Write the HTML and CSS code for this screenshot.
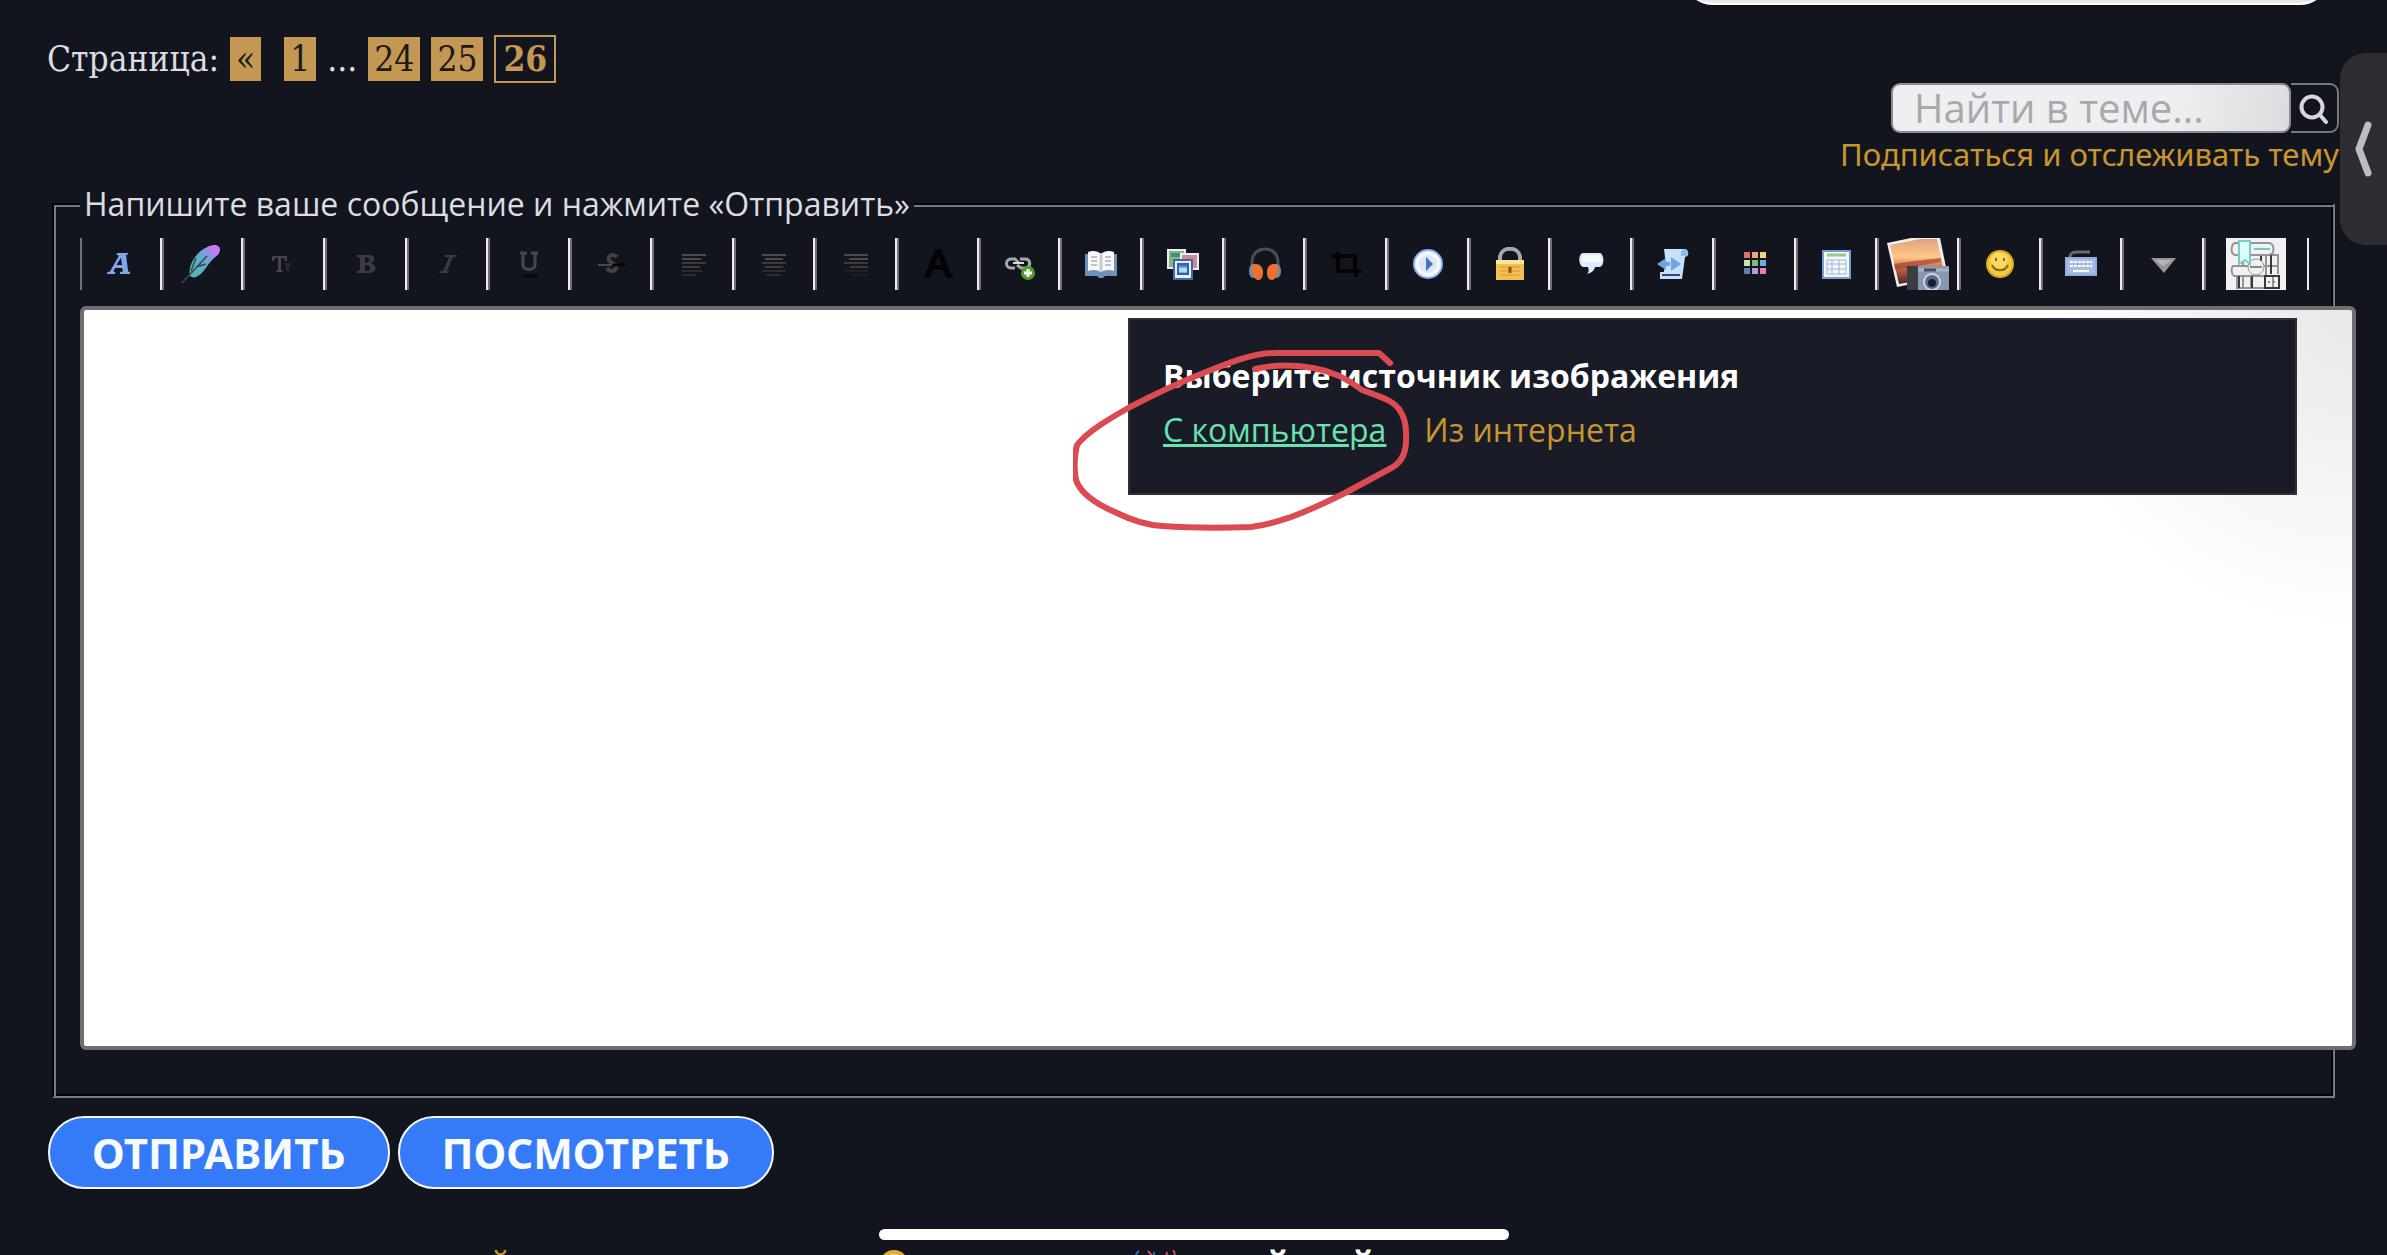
FILE: index.html
```html
<!DOCTYPE html>
<html lang="ru">
<head>
<meta charset="utf-8">
<meta name="viewport" content="width=device-width, initial-scale=1">
<title>Ответ в теме</title>
<link rel="stylesheet" href="styles.css">
</head>
<body>
<div class="top-sheet"></div>

<header class="header">
  <nav class="pages" aria-label="Страницы">
    <span class="pages-label">Страница:</span>
    <a class="page prev" href="#">«</a>
    <a class="page" href="#">1</a>
    <span>...</span>
    <a class="page" href="#">24</a>
    <a class="page" href="#">25</a>
    <b class="page current">26</b>
  </nav>
  <div class="tools">
    <form class="search">
      <input class="search-input" type="search" placeholder="Найти в теме..." aria-label="Найти в теме">
      <button class="search-button" type="button" aria-label="Найти">
        <svg width="30" height="32" viewBox="0 0 30 32" fill="none" stroke="#d6d6dc" stroke-linecap="round"><circle cx="13" cy="15" r="10.5" stroke-width="4"/><path d="M21 23l6 7" stroke-width="4"/></svg>
      </button>
    </form>
    <a class="subscribe" href="#">Подписаться и отслеживать тему</a>
  </div>
</header>

<main>
<form>
  <fieldset class="editor">
    <legend>Напишите ваше сообщение и нажмите «Отправить»</legend>
    <div class="toolbar">
      <button type="button" aria-label="Шрифт"><svg width="32" height="32" viewBox="0 0 32 32" fill="#7fa5ee"><path d="M2 26h8l.4-2-2.200-.5 2-3.500h7l.7 3.500-2.700.5-.3 2h10l.3-2-2-.5L21 7l2-.5V5H12l-.4 2 2.400.5L5 23.500l-2.500.5zM11.500 17L16 9.500l1 7.500z"/></svg></button>
      <button type="button" aria-label="Перо"><svg width="44" height="44" viewBox="0 0 44 44"><defs><linearGradient id="feather" x1="0" y1="1" x2="1" y2="0"><stop offset="0.200" stop-color="#55b5b8"/><stop offset="0.550" stop-color="#6aa9d8"/><stop offset="0.850" stop-color="#c879ee"/></linearGradient></defs><path d="M9 34C6 22 18 5 33 3c8 0 8 8 0 13-7 6-9 15-18 19-3 1-4 0-6-1z" fill="url(#feather)"/><path d="M1 41L26 14M10 29l5-13M15 25l10-3" stroke="#394550" stroke-width="1.500" fill="none"/></svg></button>
      <button type="button" aria-label="Размер"><svg width="32" height="32" viewBox="0 0 32 32" fill="#44464b"><path d="M4 8h15v5h-2l-1-3h-3v12l2 1v1H8v-1l2-1V10H7l-1 3H4z"/><path d="M17 15h6v3h-2v5h-3v-5h-1z" fill="#26292e"/></svg></button>
      <button type="button" aria-label="Полужирный"><svg width="32" height="32" viewBox="0 0 32 32" fill="#393b40"><path fill-rule="evenodd" d="M7 7h12c7 0 7 7 1 8 8 1 7 10-1 10H7v-2l3-1V10L7 9zm8 2v6c6 0 6-6 0-6zm0 8v6c7 1 7-6 0-6z"/></svg></button>
      <button type="button" aria-label="Курсив"><svg width="32" height="32" viewBox="0 0 32 32" fill="#393b40"><path d="M13 7h12l-1 2h-3l-6 14h2l-1 2H7l1-2h3l6-14h-4z"/></svg></button>
      <button type="button" aria-label="Подчёркнутый"><svg width="32" height="32" viewBox="0 0 32 32" fill="none"><path d="M7 5h7M18 5h7M10 5v12c0 6 12 6 12 0V5" stroke="#46484d" stroke-width="3"/><path d="M8 28h17" stroke="#08090c" stroke-width="3"/></svg></button>
      <button type="button" aria-label="Зачёркнутый"><svg width="32" height="32" viewBox="0 0 32 32" fill="none"><path d="M22 9c-4-4-10-1-8 3 2 4 8 3 7 8-1 4-7 4-9 0" stroke="#404247" stroke-width="4"/><path d="M3 17h14" stroke="#494b50" stroke-width="2"/><path d="M17 17h13" stroke="#050608" stroke-width="3"/></svg></button>
      <button type="button" aria-label="По левому краю"><svg width="32" height="32" viewBox="0 0 32 32" fill="none" stroke-width="2"><path d="M5 7h24M5 11h19" stroke="#484a4e"/><path d="M5 15h24M5 19h18" stroke="#393b3f"/><path d="M5 23h20M5 27h14" stroke="#292b30"/></svg></button>
      <button type="button" aria-label="По центру"><svg width="32" height="32" viewBox="0 0 32 32" fill="none" stroke-width="2"><path d="M4 7h24M7 11h18" stroke="#484a4e"/><path d="M4 15h24M7 19h18" stroke="#393b3f"/><path d="M4 23h24M8 27h15" stroke="#292b30"/></svg></button>
      <button type="button" aria-label="По правому краю"><svg width="32" height="32" viewBox="0 0 32 32" fill="none" stroke-width="2"><path d="M4 7h24M9 11h19" stroke="#484a4e"/><path d="M4 15h24M10 19h18" stroke="#393b3f"/><path d="M4 23h24M12 27h16" stroke="#1d1f24"/></svg></button>
      <button type="button" aria-label="Цвет"><svg width="32" height="34" viewBox="0 0 32 34"><path fill-rule="evenodd" d="M2 31L13 2h6l12 29h-7l-3-8H11l-3 8zm11-13h7l-4-9z" fill="#030405"/></svg></button>
      <button type="button" aria-label="Ссылка"><svg width="32" height="32" viewBox="0 0 32 32" fill="none"><path d="M12 20H8c-6 0-6-9 0-9h4l4 4M17 11h5c6 0 6 8 1 9h-5l-4-3" stroke="#a4a7a8" stroke-width="3"/><path d="M10 15h11" stroke="#d8d8d8" stroke-width="2"/><circle cx="25" cy="25" r="7" fill="#4f9c27"/><path d="M25 21v8M21 25h8" stroke="#fff" stroke-width="3"/></svg></button>
      <button type="button" aria-label="Книга"><svg width="32" height="32" viewBox="0 0 32 32"><path d="M0 6h32v22H20l-2 2h-4l-2-2H0z" fill="#6e91b7"/><path d="M3 4c5-2 10-1 13 2 3-3 8-4 13-2v19c-5-2-10-1-13 1-3-2-8-3-13-1z" fill="#f8f8f8"/><path d="M16 5v19" stroke="#c9ccd2" stroke-width="3"/><path d="M6 9h6M6 13h6M6 17h6M20 9h6M20 13h6M20 17h6" stroke="#bcc1c9" stroke-width="2"/></svg></button>
      <button type="button" aria-label="Галерея"><svg width="32" height="32" viewBox="0 0 32 32" stroke="#e9effa" stroke-width="2"><path d="M1 2h17v18H1z" fill="#86b783"/><path d="M4 5h11v4H4z" fill="#4a8d6a" stroke="none"/><path d="M14 6h17v15H14z" fill="#d18a94"/><path d="M7 12h18v19H7z" fill="#e9effa" stroke="#3f68ad"/><path d="M11 16h10v10H11z" fill="#4c88c8" stroke="#3561a8"/><path d="M12 22h8" stroke="#a5ddf7" stroke-width="5"/></svg></button>
      <button type="button" aria-label="Аудио"><svg width="32" height="34" viewBox="0 0 32 34"><path d="M3 22V14C4-2 28-2 29 14v8" fill="none" stroke="#4a4e52" stroke-width="3"/><ellipse cx="4" cy="24" rx="4" ry="7" fill="#628eb2"/><ellipse cx="28" cy="24" rx="4" ry="7" fill="#628eb2"/><path d="M3 18c6-3 11 1 11 7s-2 8-5 8-8-7-6-15zM29 18c-6-3-11 1-11 7s2 8 5 8 8-7 6-15z" fill="#ed7130"/></svg></button>
      <button type="button" aria-label="Обрезать"><svg width="32" height="32" viewBox="0 0 32 32"><path d="M8 4v19h18v6M2 8h23v15h6" fill="none" stroke="#030405" stroke-width="4"/></svg></button>
      <button type="button" aria-label="Видео"><svg width="32" height="32" viewBox="0 0 32 32"><circle cx="16" cy="16" r="15" fill="#8ab0e8"/><circle cx="16" cy="16" r="13" fill="#f4f7fd"/><circle cx="16" cy="16" r="9" fill="#dce7f8"/><path d="M14 9l7 7-7 7z" fill="#4974bb"/></svg></button>
      <button type="button" aria-label="Скрытый текст"><svg width="32" height="34" viewBox="0 0 32 34"><path d="M6 14V10C7-1 25-1 26 10v4" fill="none" stroke="#a5a7ab" stroke-width="4"/><path d="M2 13h28v20H2z" fill="#f2bf55"/><path d="M2 13h28v4H2z" fill="#fbe596"/><path d="M6 20h20M6 24h20M6 28h20" stroke="#d9972e" stroke-width="1"/><path d="M16 20v6" stroke="#80571b" stroke-width="3"/></svg></button>
      <button type="button" aria-label="Цитата"><svg width="32" height="32" viewBox="0 0 32 32"><path d="M8 5h17c4 1 5 12 0 14h-5c-1 4-4 6-8 7 2-2 2-4 1-7H8C3 17 3 6 8 5z" fill="#dceaff"/><path d="M9 7h15c2 1 3 5 2 7H7c-1-3 0-6 2-7z" fill="#f4f8ff"/></svg></button>
      <button type="button" aria-label="Код"><svg width="32" height="34" viewBox="0 0 32 34"><path d="M7 2h20c5 0 6 7 1 8l-3 22H3v-7h4l1-15z" fill="#c7e0fb"/><path d="M27 2c5 0 5 7 1 7h-4V4" fill="#8cbce9"/><path d="M9 11l-9 6 9 6v-4h4v-4H9zM14 10l10 7-10 7z" fill="#6fa3e2"/><path d="M5 28h18" stroke="#314971" stroke-width="2"/></svg></button>
      <button type="button" aria-label="Палитра"><svg width="32" height="32" viewBox="0 0 32 32"><path d="M5 4h6v6H5z" fill="#e1726b"/><path d="M13 4h6v6h-6z" fill="#eca47a"/><path d="M21 4h6v6h-6z" fill="#ebd985"/><path d="M5 12h6v6H5z" fill="#cfe5a8"/><path d="M13 12h6v6h-6z" fill="#74c177"/><path d="M21 12h6v6h-6z" fill="#70aae3"/><path d="M5 20h6v6H5z" fill="#657daf"/><path d="M13 20h6v6h-6z" fill="#bb96d9"/><path d="M21 20h6v6h-6z" fill="#ec7eab"/></svg></button>
      <button type="button" aria-label="Таблица"><svg width="32" height="32" viewBox="0 0 32 32"><path d="M3 3h27v27H3z" fill="#f3f7fc" stroke="#729dd3" stroke-width="2"/><path d="M7 7h19" stroke="#9bc889" stroke-width="3"/><path d="M7 12h19v14H7zM7 16h19M7 21h19M12 12v14M19 12v14" fill="none" stroke="#9cb5d9"/></svg></button>
      <button type="button" aria-label="Изображение"><svg width="62" height="52" viewBox="0 0 62 52"><defs><linearGradient id="sunset" x1="0" y1="0" x2="0" y2="1"><stop offset="0" stop-color="#dfa184"/><stop offset="0.400" stop-color="#ffc987"/><stop offset="0.650" stop-color="#cf6045"/><stop offset="1" stop-color="#4d2525"/></linearGradient></defs><path d="M0 5L24 0h29l8 39-51 10z" fill="#f0eeee"/><path d="M3 7l30-6h17l8 37-46 8z" fill="url(#sunset)"/><path d="M7 26l20-3 27-3v4l-24 4-22 4z" fill="#a3453a" opacity=".7"/><path d="M20 28h42v24H20z" fill="#8999b3"/><path d="M20 28h11v24H20z" fill="#3b3d44"/><path d="M31 32h31" stroke="#a9b5c7" stroke-width="3"/><circle cx="45" cy="44" r="9" fill="#d0d6e1"/><circle cx="45" cy="44" r="7" fill="#5d6b83"/><circle cx="45" cy="45" r="4" fill="#151e35"/><path d="M37 32h12" stroke="#434d61" stroke-width="3"/></svg></button>
      <button type="button" aria-label="Смайлы"><svg width="32" height="32" viewBox="0 0 32 32"><circle cx="16" cy="16" r="14" fill="#dca91f"/><circle cx="16" cy="16" r="12" fill="#f0cb46"/><circle cx="15" cy="12" r="8" fill="#f6db63"/><path d="M12 10v3M20 10v3M8 17c3 7 13 7 16 0" fill="none" stroke="#96660c" stroke-width="2"/></svg></button>
      <button type="button" aria-label="Клавиатура"><svg width="32" height="32" viewBox="0 0 32 32"><path d="M5 10c0-6 4-6 8-6h12" fill="none" stroke="#66696d" stroke-width="3"/><path d="M0 9h32v19H0z" fill="#8fade0"/><path d="M2 11h28v15H2z" fill="#a5bce5"/><path d="M5 14h22M5 18h22" stroke="#fff" stroke-width="2" stroke-dasharray="3 1"/><path d="M8 23h16" stroke="#fff" stroke-width="2"/></svg></button>
      <button type="button" aria-label="Ещё"><svg width="32" height="32" viewBox="0 0 32 32"><path d="M4 10h25L17 25z" fill="#969696"/><path d="M8 12h17l-9 6z" fill="#b7b7b7"/></svg></button>
      <button type="button" aria-label="Библиотека"><svg width="60" height="52" viewBox="0 0 60 52"><path d="M0 0h60v52H0z" fill="#f1f1f2"/><g fill="none" stroke="#929599" stroke-width="2"><path d="M9 5h34c6 1 6 11 0 12H9c-5-1-4-11 0-12zM17 17h35v11H17zM7 28h33v10H8c-3-2-3-8-1-10zM11 38h36v12H11z"/><path d="M40 17v11M45 17v18M52 17v19M17 38v12M25 38v12"/></g><path d="M39 38h14v12H39zM13 38v12M26 38v12M35 18v10M45 17v19" fill="none" stroke="#34373c" stroke-width="2"/><circle cx="30" cy="29" r="8" fill="#f1f1f2" stroke="#999" stroke-width="1"/><path d="M24 29h12M42 44h2M47 44h2" stroke="#888" stroke-width="2"/><path d="M13 3h11v23l-5-4-6 4z" fill="#d9ffff" stroke="#7acac9" stroke-width="2"/><path d="M28 11h16" stroke="#70c6c4" stroke-width="2"/></svg></button>
    </div>
    <div class="message">
      <textarea class="message-text" aria-label="Сообщение"></textarea>
      <section class="source">
        <h2>Выберите источник изображения</h2>
        <p class="source-links"><a class="active" href="#">С компьютера</a><a href="#">Из интернета</a></p>
      </section>
      <svg class="mark" width="340" height="182" viewBox="0 0 340 182" fill="none" stroke="#dc4a52" stroke-width="6" stroke-linecap="round" stroke-linejoin="round"><path d="M317 14L306 4H202C180 4 155 14 133 23 105 34 80 46 57 58 36 70 15 82 4 96 1 108 1 120 3 131 8 146 25 156 44 164 60 172 75 176 89 177 118 179 150 179 178 178 195 176 206 172 218 168 240 160 256 152 272 144L320 118C330 112 334 102 333 86 333 72 330 66 326 60 318 50 304 47 289 41 275 30 258 22 240 19 215 15 198 16 182 20"/></svg>
    </div>
  </fieldset>
  <div class="actions">
    <button class="action" type="submit">ОТПРАВИТЬ</button>
    <button class="action" type="button">ПОСМОТРЕТЬ</button>
  </div>
</form>
</main>

<footer class="footer">
  <a href="#">й</a>
  <svg class="footer-smile" width="28" height="28" viewBox="0 0 28 28"><circle cx="14" cy="14" r="14" fill="#e5ae2e"/><circle cx="14" cy="15" r="11" fill="#ffe388"/></svg>
  <svg width="44" height="20" viewBox="0 0 44 20" fill="none" stroke-width="2"><path d="M5 1C1 3 1 8 2 14" stroke="#3267b8"/><path d="M14 1l7 8M33 2l-1 7M39 0c3 3 2 8 1 12" stroke="#d84768"/><path d="M20 2v3" stroke="#3267b8"/></svg>
  <b class="footer-title"><span>й</span><span>й</span></b>
</footer>

<button class="side-tab" type="button" aria-label="Открыть панель"><svg width="18" height="56" viewBox="0 0 18 56" fill="none" stroke="#bdbdc9" stroke-width="7" stroke-linecap="round" stroke-linejoin="round"><path d="M13 4L4 28l9 24"/></svg></button>
<div class="home-bar"></div>
</body>
</html>
```
FILE: styles.css
```css
* {
  box-sizing: border-box;
}

body {
  margin: 0;
  height: 100vh;
  overflow: hidden;
  position: relative;
  background: #12151d;
  color: #dcdde2;
  font-family: "Open Sans", "Noto Sans", sans-serif;
  font-size: 32px;
  line-height: 44px;
}

a {
  color: #c9952f;
  text-decoration: none;
}

button {
  padding: 0;
  border: 0;
  background: none;
  color: inherit;
  font: inherit;
}

svg {
  display: block;
}

.header {
  display: flex;
  justify-content: space-between;
  padding: 35px 48px 0 47px;
}

.pages {
  display: flex;
  align-items: center;
  align-self: flex-start;
  gap: 11px;
  height: 48px;
  font-family: "DejaVu Serif Condensed", "DejaVu Serif", serif;
  font-size: 35px;
}

.page {
  padding: 0 6px;
  background: #c49853;
  color: #1b1a16;
}

.prev {
  margin-right: 12px;
}

.current {
  border: 2px solid #c49853;
  padding: 0 7px;
  background: none;
  color: #c49853;
}

.tools {
  display: flex;
  flex-direction: column;
  align-items: flex-end;
  padding-top: 48px;
}

.search {
  display: flex;
}

.search-input {
  width: 400px;
  height: 50px;
  padding: 0 21px 2px;
  border: 2px solid #8b8b90;
  border-radius: 9px;
  background: linear-gradient(100deg, #efeff1 70%, #dcdce0);
  font: 40px "Open Sans", "Noto Sans", sans-serif;
}

.search-input::placeholder {
  color: #a9a9ac;
  opacity: 1;
}

.search-button {
  display: grid;
  place-items: center;
  width: 48px;
  border: 2px solid #77787e;
  border-left: 0;
  border-radius: 0 9px 9px 0;
}

.subscribe {
  font-family: "Noto Sans", sans-serif;
  font-size: 31px;
  line-height: 42px;
}

.editor {
  min-width: 0;
  margin: 6px 52px 0;
  padding: 11px 24px 46px 26px;
  border: 2px solid;
  border-color: #000 #77788a #77788a #000;
  box-shadow: inset 2px 2px #77788a, inset -2px -2px #000;
}

.editor legend {
  padding: 0 4px;
  background: #12151d;
  line-height: 46px;
}

.toolbar {
  display: grid;
  grid-template-columns: repeat(26, 7fr) 9fr;
  height: 52px;
  margin-bottom: 16px;
}

.toolbar button {
  display: grid;
  place-items: center;
  min-width: 0;
  overflow: hidden;
  border-left: 2px solid #6f7074;
  border-right: 2px solid #eeeef2;
}

.message {
  position: relative;
  width: calc(100% + 47px);
}

.message-text {
  display: block;
  width: 100%;
  height: 744px;
  border: 4px solid #6f6f6f;
  border-radius: 6px;
  background: radial-gradient(circle at 100% 0, #e8e8ea, #fff 320px);
  resize: none;
}

.source {
  position: absolute;
  top: 12px;
  right: 59px;
  width: 1169px;
  height: 177px;
  padding: 34px 33px;
  border: 2px solid #302f38;
  background: #191c27;
}

.source h2 {
  margin: 0 0 10px;
  color: #fff;
  font-size: 32px;
}

.source-links {
  display: flex;
  gap: 38px;
  margin: 0;
}

.source .active {
  color: #67e3b0;
  text-decoration: underline;
}

.mark {
  position: absolute;
  top: 43px;
  right: 943px;
}

.actions {
  display: flex;
  gap: 8px;
  padding: 18px 48px 0;
}

.action {
  height: 73px;
  padding: 0 42px;
  border: 2px solid #f3f8ff;
  border-radius: 36px;
  background: #357af6;
  color: #f6fbff;
  font: bold 42px "Noto Sans", sans-serif;
}

.footer {
  display: flex;
  padding: 52px 0 0 490px;
}

.footer > svg {
  margin-top: 9px;
}

.footer > .footer-smile {
  margin-left: 370px;
  margin-right: 226px;
}

.footer-title {
  display: flex;
  gap: 62px;
  margin-left: 88px;
  color: #fff;
}

.top-sheet {
  position: absolute;
  top: -55px;
  right: 57px;
  width: 647px;
  height: 60px;
  border: 2px solid #fff;
  border-radius: 30px;
  background: #e8e8ea;
}

.side-tab {
  position: absolute;
  top: 53px;
  right: 0;
  display: grid;
  place-items: center;
  width: 47px;
  height: 192px;
  border-radius: 26px 0 0 26px;
  background: #2d2e31;
}

.home-bar {
  position: absolute;
  left: 50%;
  bottom: 15px;
  width: 630px;
  height: 11px;
  border-radius: 6px;
  background: #fff;
  transform: translateX(-50%);
}
```
